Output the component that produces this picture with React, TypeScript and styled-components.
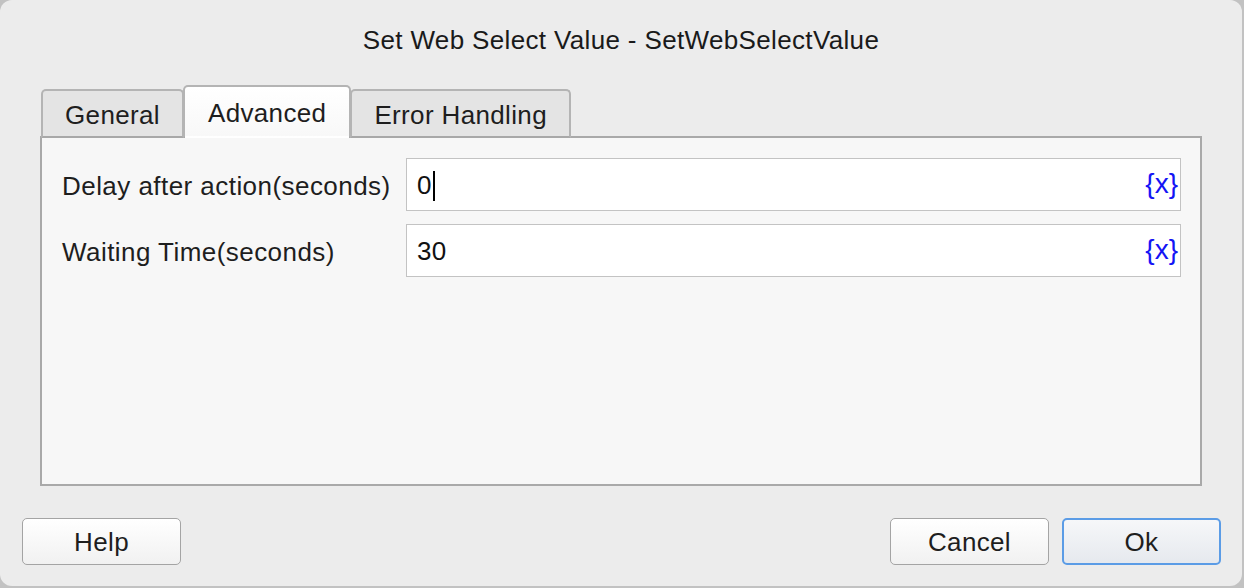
import React from "react";
import styled, { createGlobalStyle } from "styled-components";

const Global = createGlobalStyle`
  html, body { margin: 0; padding: 0; background: #c2c2c2; }
  body {
    font-family: "Liberation Sans", Arial, sans-serif;
    color: #1e1e1e;
    letter-spacing: 0.35px;
  }
  * { box-sizing: border-box; }
`;

const Window = styled.div`
  width: 1242px;
  height: 586px;
  background: #ececec;
  border-radius: 12px;
  display: flex;
  flex-direction: column;
  overflow: hidden;
`;

const Title = styled.div`
  height: 80px;
  display: flex;
  align-items: center;
  justify-content: center;
  font-size: 26px;
  color: #1a1a1a;
`;

const Body = styled.div`
  padding: 7px 40px 0 40px;
  display: flex;
  flex-direction: column;
`;

const TabRow = styled.div`
  display: flex;
  align-items: flex-end;
  padding-left: 1px;
  height: 51px;
  position: relative;
  z-index: 1;
  margin-bottom: -2px;
`;

const Tab = styled.div<{ $active?: boolean }>`
  height: ${(p) => (p.$active ? 53 : 49)}px;
  padding: 0 ${(p) => (p.$active ? 23 : 22)}px;
  display: flex;
  align-items: flex-start;
  padding-top: ${(p) => (p.$active ? 11 : 9)}px;
  font-size: 26px;
  color: #1e1e1e;
  background: ${(p) => (p.$active ? "linear-gradient(#ffffff, #f8f8f8)" : "#e4e4e4")};
  border: 2px solid #b4b4b4;
  border-bottom: ${(p) => (p.$active ? "2px solid transparent" : "2px solid #a8a8a8")};
  border-radius: 5px 5px 0 0;
  margin-left: ${(p) => (p.$active ? "-1px" : "0")};
  margin-right: ${(p) => (p.$active ? "-1px" : "0")};
  position: relative;
  z-index: ${(p) => (p.$active ? 2 : 1)};
`;

const Panel = styled.div`
  height: 350px;
  background: #f7f7f7;
  border: 2px solid #a9a9a9;
  padding: 20px 19px 0 18px;
  display: flex;
  flex-direction: column;
  gap: 13px;
`;

const Row = styled.div`
  display: flex;
  align-items: center;
  height: 53px;
`;

const Label = styled.div`
  width: 346px;
  padding-left: 2px;
  font-size: 26px;
  letter-spacing: 0.45px;
  color: #1e1e1e;
  padding-top: 3px;
`;

const Field = styled.div`
  flex: 1;
  height: 53px;
  background: #ffffff;
  border: 1px solid #c3c3c3;
  display: flex;
  align-items: center;
  padding: 2px 2px 0 10px;
  font-size: 26px;
  color: #111;
`;

const Value = styled.span`
  flex: 1;
  display: flex;
  align-items: center;
`;

const Caret = styled.span`
  display: inline-block;
  width: 2px;
  height: 30px;
  background: #000;
  margin-left: 1px;
`;

const VarIcon = styled.span`
  color: #1414f5;
  font-size: 28px;
  letter-spacing: 0px;
  margin-bottom: 3px;
`;

const Footer = styled.div`
  display: flex;
  align-items: center;
  padding: 32px 21px 0 22px;
`;

const Spacer = styled.div`
  flex: 1;
`;

const Button = styled.div<{ $primary?: boolean }>`
  width: 159px;
  height: 47px;
  border-radius: 5px;
  border: ${(p) => (p.$primary ? "2px solid #5b9ce6" : "1.5px solid #a4a4a4")};
  background: ${(p) =>
    p.$primary ? "linear-gradient(#f6f7f9, #e6e9ee)" : "linear-gradient(#ffffff, #f1f1f1)"};
  display: flex;
  align-items: center;
  justify-content: center;
  font-size: 26px;
  color: #1e1e1e;
  padding-top: 2px;
  & + & {
    margin-left: 13px;
  }
`;

export default function App() {
  return (
    <>
      <Global />
      <Window>
        <Title>Set Web Select Value - SetWebSelectValue</Title>
        <Body>
          <TabRow>
            <Tab>General</Tab>
            <Tab $active>Advanced</Tab>
            <Tab>Error Handling</Tab>
          </TabRow>
          <Panel>
            <Row>
              <Label>Delay after action(seconds)</Label>
              <Field>
                <Value>
                  0<Caret />
                </Value>
                <VarIcon>{"{x}"}</VarIcon>
              </Field>
            </Row>
            <Row>
              <Label>Waiting Time(seconds)</Label>
              <Field>
                <Value>30</Value>
                <VarIcon>{"{x}"}</VarIcon>
              </Field>
            </Row>
          </Panel>
        </Body>
        <Footer>
          <Button>Help</Button>
          <Spacer />
          <Button>Cancel</Button>
          <Button $primary>Ok</Button>
        </Footer>
      </Window>
    </>
  );
}
